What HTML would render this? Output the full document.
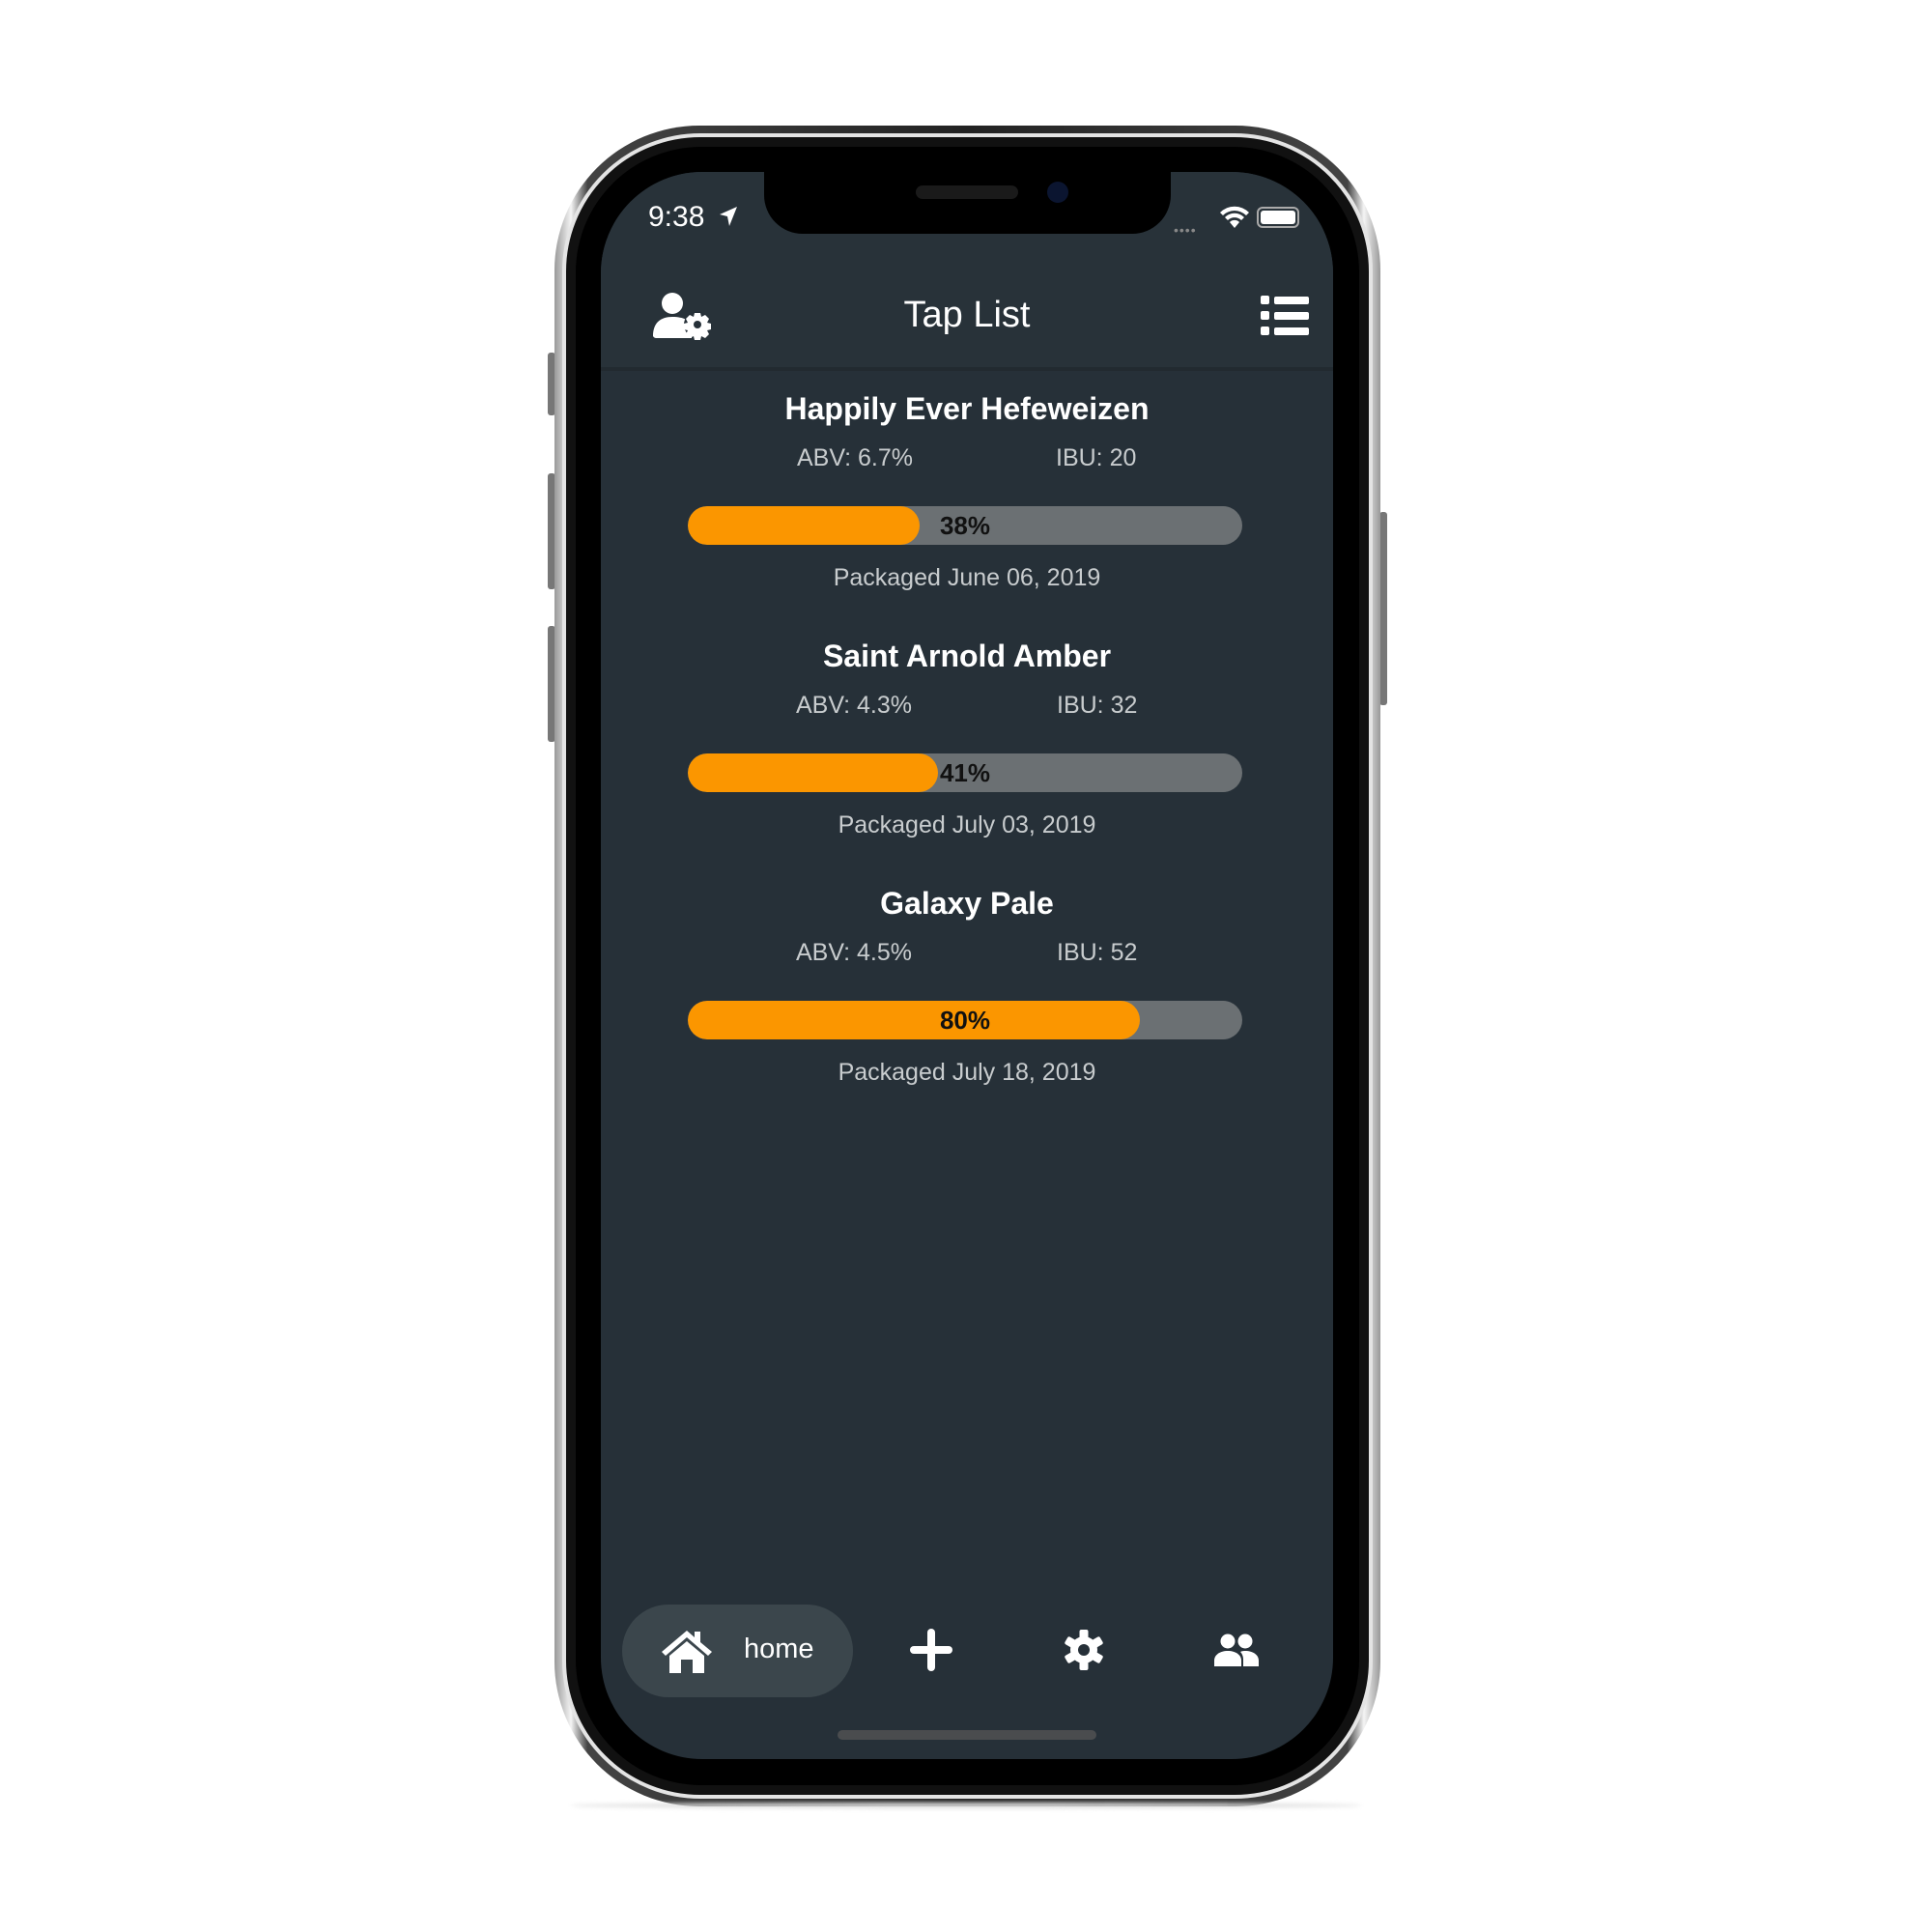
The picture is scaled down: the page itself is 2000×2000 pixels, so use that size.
<!DOCTYPE html>
<html><head><meta charset="utf-8"><style>
*{margin:0;padding:0;box-sizing:border-box}
body{width:2000px;height:2000px;background:#fff;position:relative;overflow:hidden;font-family:"Liberation Sans",sans-serif}
.abs{position:absolute}
.frame{left:574px;top:130px;width:855px;height:1740px;border-radius:150px;background:linear-gradient(90deg,#999,#f4f4f4 2%,#444 4%,#222 50%,#444 96%,#f4f4f4 98%,#999);}
.f2{left:582px;top:138px;width:839px;height:1724px;border-radius:143px;background:#111;border:4px solid #e4e4e4}
.f3{left:596px;top:152px;width:811px;height:1696px;border-radius:130px;background:#000}
.screen{left:622px;top:178px;width:758px;height:1643px;border-radius:105px;background:#263038;overflow:hidden}
.btn{background:#777;border-radius:3px}
.c{text-align:center;color:#fff;width:758px;left:0}
.title{font-weight:bold;font-size:32px}
.meta{color:#c8ccce;font-size:25px}
.bar{left:90px;width:574px;height:40px;border-radius:20px;background:#6b7073;overflow:hidden}
.fill{left:0;top:0;height:40px;border-radius:20px;background:#fb9600}
.pct{left:0;width:574px;top:0;line-height:40px;text-align:center;font-weight:bold;font-size:26px;color:#111}
</style></head><body>
<div class="abs btn" style="left:567px;top:365px;width:8px;height:65px"></div>
<div class="abs btn" style="left:567px;top:490px;width:8px;height:120px"></div>
<div class="abs btn" style="left:567px;top:648px;width:8px;height:120px"></div>
<div class="abs btn" style="left:1428px;top:530px;width:8px;height:200px"></div>
<div class="abs frame"></div>
<div class="abs f2"></div>
<div class="abs f3"></div>
<div class="abs screen">
  <div class="abs" style="left:0;top:0;width:758px;height:202px;background:#283239"></div>
  <div class="abs" style="left:0;top:202px;width:758px;height:4px;background:#222a30"></div>
  <div class="abs" style="left:169px;top:-10px;width:421px;height:74px;background:#000;border-radius:0 0 40px 40px"></div>
  <div class="abs" style="left:326px;top:14px;width:106px;height:14px;background:#1a1a1a;border-radius:7px"></div>
  <div class="abs" style="left:462px;top:10px;width:22px;height:22px;background:#0b1530;border-radius:50%"></div>
  <div class="abs" style="left:49px;top:30px;color:#fff;font-size:30px">9:38</div>
  <svg class="abs" style="left:122px;top:35px" width="20" height="22" viewBox="0 0 20 22"><path d="M19 1L1 9l8 2 2 10z" fill="#fff"/></svg>
  <div class="abs" style="left:593px;top:52px;color:#888;font-size:14px;letter-spacing:1px">••••</div>
  <svg class="abs" style="left:640px;top:34px" width="32" height="26" viewBox="0 0 32 26"><path d="M16 24l-5-6a7 7 0 0110 0zM6 13a14 14 0 0120 0l-3 3a10 10 0 00-14 0zM1 8a21 21 0 0130 0l-3 3a17 17 0 00-24 0z" fill="#fff"/></svg>
  <div class="abs" style="left:679px;top:36px;width:44px;height:22px;border:2px solid #aaa;border-radius:6px;padding:2px"><div style="width:100%;height:100%;background:#fff;border-radius:3px"></div></div>
  <div class="c abs" style="top:127px;font-size:38px">Tap List</div>
  <svg class="abs" style="left:54px;top:124px" width="64" height="50" viewBox="0 0 64 50"><circle cx="20" cy="12" r="11" fill="#fff"/><path d="M0 46c0-14 8-20 20-20s18 4 20 8v14H4a4 4 0 01-4-2z" fill="#fff"/><g transform="translate(46,34)"><circle r="14" fill="#263038"/><path d="M-3-12h6l1 4 4-2 4 4-2 4 4 1v6l-4 1 2 4-4 4-4-2-1 4h-6l-1-4-4 2-4-4 2-4-4-1v-6l4-1-2-4 4-4 4 2z" fill="#fff"/><circle r="4" fill="#263038"/></g></svg>
  <svg class="abs" style="left:683px;top:128px" width="50" height="42" viewBox="0 0 50 42"><g fill="#fff"><rect x="0" y="0" width="9" height="9" rx="2"/><rect x="0" y="16" width="9" height="9" rx="2"/><rect x="0" y="32" width="9" height="9" rx="2"/><rect x="14" y="1" width="36" height="8" rx="2"/><rect x="14" y="17" width="36" height="8" rx="2"/><rect x="14" y="33" width="36" height="8" rx="2"/></g></svg>

  <div class="c abs title" style="top:227px">Happily Ever Hefeweizen</div>
  <div class="abs meta" style="left:203px;top:282px">ABV: 6.7%</div>
  <div class="abs meta" style="left:471px;top:282px">IBU: 20</div>
  <div class="abs bar" style="top:346px"><div class="abs fill" style="width:240px"></div><div class="abs pct">38%</div></div>
  <div class="c abs meta" style="top:406px">Packaged June 06, 2019</div>

  <div class="c abs title" style="top:483px">Saint Arnold Amber</div>
  <div class="abs meta" style="left:202px;top:538px">ABV: 4.3%</div>
  <div class="abs meta" style="left:472px;top:538px">IBU: 32</div>
  <div class="abs bar" style="top:602px"><div class="abs fill" style="width:259px"></div><div class="abs pct">41%</div></div>
  <div class="c abs meta" style="top:662px">Packaged July 03, 2019</div>

  <div class="c abs title" style="top:739px">Galaxy Pale</div>
  <div class="abs meta" style="left:202px;top:794px">ABV: 4.5%</div>
  <div class="abs meta" style="left:472px;top:794px">IBU: 52</div>
  <div class="abs bar" style="top:858px"><div class="abs fill" style="width:468px"></div><div class="abs pct">80%</div></div>
  <div class="c abs meta" style="top:918px">Packaged July 18, 2019</div>

  <div class="abs" style="left:22px;top:1483px;width:239px;height:96px;border-radius:48px;background:#3b464c"></div>
  <svg class="abs" style="left:62px;top:1508px" width="54" height="46" viewBox="0 0 54 46"><path d="M27 2L1 24l4 4 22-19 22 19 4-4-12-10V3h-6v6z" fill="#fff"/><path d="M9 28l18-15 18 15v18H33V32h-12v14H9z" fill="#fff"/></svg>
  <div class="abs" style="left:148px;top:1513px;color:#fff;font-size:29px">home</div>
  <svg class="abs" style="left:320px;top:1508px" width="44" height="44" viewBox="0 0 44 44"><rect x="18" y="0" width="8" height="44" rx="4" fill="#fff"/><rect x="0" y="18" width="44" height="8" rx="4" fill="#fff"/></svg>
  <svg class="abs" style="left:479px;top:1509px" width="42" height="42" viewBox="-21 -21 42 42"><g fill="#fff"><circle r="14"/><rect x="-4.5" y="-21" width="9" height="42" rx="2"/><rect x="-4.5" y="-21" width="9" height="42" rx="2" transform="rotate(60)"/><rect x="-4.5" y="-21" width="9" height="42" rx="2" transform="rotate(120)"/></g><circle r="6" fill="#263038"/></svg>
  <svg class="abs" style="left:635px;top:1513px" width="46" height="34" viewBox="0 0 46 34"><circle cx="14" cy="8" r="7.5" fill="#fff"/><circle cx="32" cy="8" r="7.5" fill="#fff"/><path d="M0 34v-6c0-6 6-10 14-10s14 4 14 10v6z" fill="#fff"/><path d="M30 34v-7c0-3-1-6-3-8 2-1 4-1 5-1 8 0 14 4 14 10v6z" fill="#fff"/></svg>
  <div class="abs" style="left:245px;top:1613px;width:268px;height:10px;border-radius:5px;background:#4a4c4e"></div>
</div>
<div class="abs" style="left:590px;top:1866px;width:820px;height:6px;border-radius:50%;background:#ddd;filter:blur(2px)"></div>
</body></html>
